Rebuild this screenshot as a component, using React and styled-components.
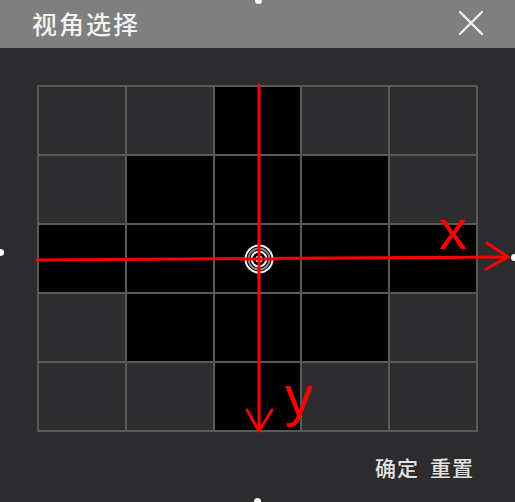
import React from "react";
import styled, { createGlobalStyle } from "styled-components";

const Global = createGlobalStyle`
  html, body { margin: 0; padding: 0; background: #2c2c2e; }
  #root { width: 515px; height: 502px; }
  * { box-sizing: border-box; }
`;

const Window = styled.div`
  position: relative;
  width: 515px;
  height: 502px;
  display: flex;
  flex-direction: column;
  background: #2c2c2e;
  font-family: "Noto Sans CJK SC", "Noto Sans", sans-serif;
  overflow: hidden;
`;

const Header = styled.div`
  height: 48px;
  flex: none;
  display: flex;
  align-items: center;
  justify-content: space-between;
  padding: 0 30px 0 32px;
  background: #7f7f7f;
`;

const Title = styled.span`
  color: #f2f2f2;
  font-size: 25px;
  font-weight: 500;
  line-height: 1;
  letter-spacing: 2px;
  margin-top: -2px;
`;

const CloseButton = styled.button`
  width: 28px;
  height: 28px;
  padding: 0;
  border: none;
  background: transparent;
  display: flex;
  align-items: center;
  justify-content: center;
  cursor: pointer;
  margin-top: -2px;
`;

const Content = styled.div`
  flex: 1;
  display: flex;
  flex-direction: column;
  padding: 37px 0 0 37px;
`;

const Board = styled.div`
  position: relative;
  width: 441px;
  height: 347px;
  display: grid;
  grid-template-columns: repeat(5, 1fr);
  grid-template-rows: repeat(5, 1fr);
  gap: 2px;
  padding: 2px;
  background: #595959;
`;

const Cell = styled.div`
  background: ${(p) => (p.$dark ? "#000000" : "#2d2d30")};
`;

const Overlay = styled.svg`
  position: absolute;
  left: 0;
  top: 0;
  overflow: visible;
  pointer-events: none;
`;

const AxisLabel = styled.span`
  position: absolute;
  left: ${(p) => p.$x}px;
  top: ${(p) => p.$y}px;
  color: #ff0000;
  font-family: "Liberation Sans", Arial, sans-serif;
  font-size: 56px;
  line-height: 1;
`;

const Footer = styled.div`
  flex: 1;
  display: flex;
  align-items: center;
  justify-content: flex-end;
  gap: 11px;
  padding-right: 41px;
`;

const TextButton = styled.button`
  border: none;
  background: transparent;
  padding: 0;
  color: #e2e2e2;
  font-family: "Noto Sans CJK SC", "Noto Sans", sans-serif;
  font-size: 21px;
  font-weight: 500;
  letter-spacing: 1px;
  line-height: 1;
  cursor: pointer;
`;

const Handle = styled.span`
  position: absolute;
  width: 7px;
  height: 7px;
  border-radius: 50%;
  background: #ffffff;
  left: ${(p) => p.$x - 3.5}px;
  top: ${(p) => p.$y - 3.5}px;
`;

const dark = [
  [0, 0, 1, 0, 0],
  [0, 1, 1, 1, 0],
  [1, 1, 1, 1, 1],
  [0, 1, 1, 1, 0],
  [0, 0, 1, 0, 0],
];

export default function App() {
  return (
    <>
      <Global />
      <Window>
        <Header>
          <Title>视角选择</Title>
          <CloseButton aria-label="close">
            <svg width="26" height="26" viewBox="0 0 26 26">
              <path d="M2 2 L24 24 M24 2 L2 24" stroke="#f0f0f0" strokeWidth="2.4" strokeLinecap="round" />
            </svg>
          </CloseButton>
        </Header>
        <Content>
          <Board>
            {dark.flat().map((d, i) => (
              <Cell key={i} $dark={!!d} />
            ))}
            <Overlay width="441" height="347" viewBox="0 0 441 347">
              <g stroke="#ff0000" strokeWidth="3" fill="none" strokeLinecap="round" strokeLinejoin="round">
                <line x1="222" y1="0" x2="222" y2="346" />
                <polyline points="210,325 222,346 235,325" />
                <line x1="0" y1="175" x2="471" y2="172" />
                <polyline points="450,158 471,172 449,184" />
              </g>
              <g transform="translate(222,174)">
                <circle r="15" fill="#000" />
                <circle r="13.5" fill="none" stroke="#f2f2f2" strokeWidth="2" />
                <circle r="10.5" fill="none" stroke="#8a8a8a" strokeWidth="2" />
                <circle r="7.5" fill="none" stroke="#f2f2f2" strokeWidth="2" />
                <circle r="3.5" fill="#ffffff" />
              </g>
              <g stroke="#ff0000" strokeWidth="3">
                <line x1="222" y1="155" x2="222" y2="193" />
                <line x1="203" y1="174" x2="241" y2="174" />
              </g>
            </Overlay>
            <AxisLabel $x={402} $y={117}>x</AxisLabel>
            <AxisLabel $x={248} $y={283}>y</AxisLabel>
          </Board>
          <Footer>
            <TextButton>确定</TextButton>
            <TextButton>重置</TextButton>
          </Footer>
        </Content>
        <Handle $x={258} $y={0} />
        <Handle $x={0} $y={252} />
        <Handle $x={514} $y={257} />
        <Handle $x={257} $y={501} />
      </Window>
    </>
  );
}
